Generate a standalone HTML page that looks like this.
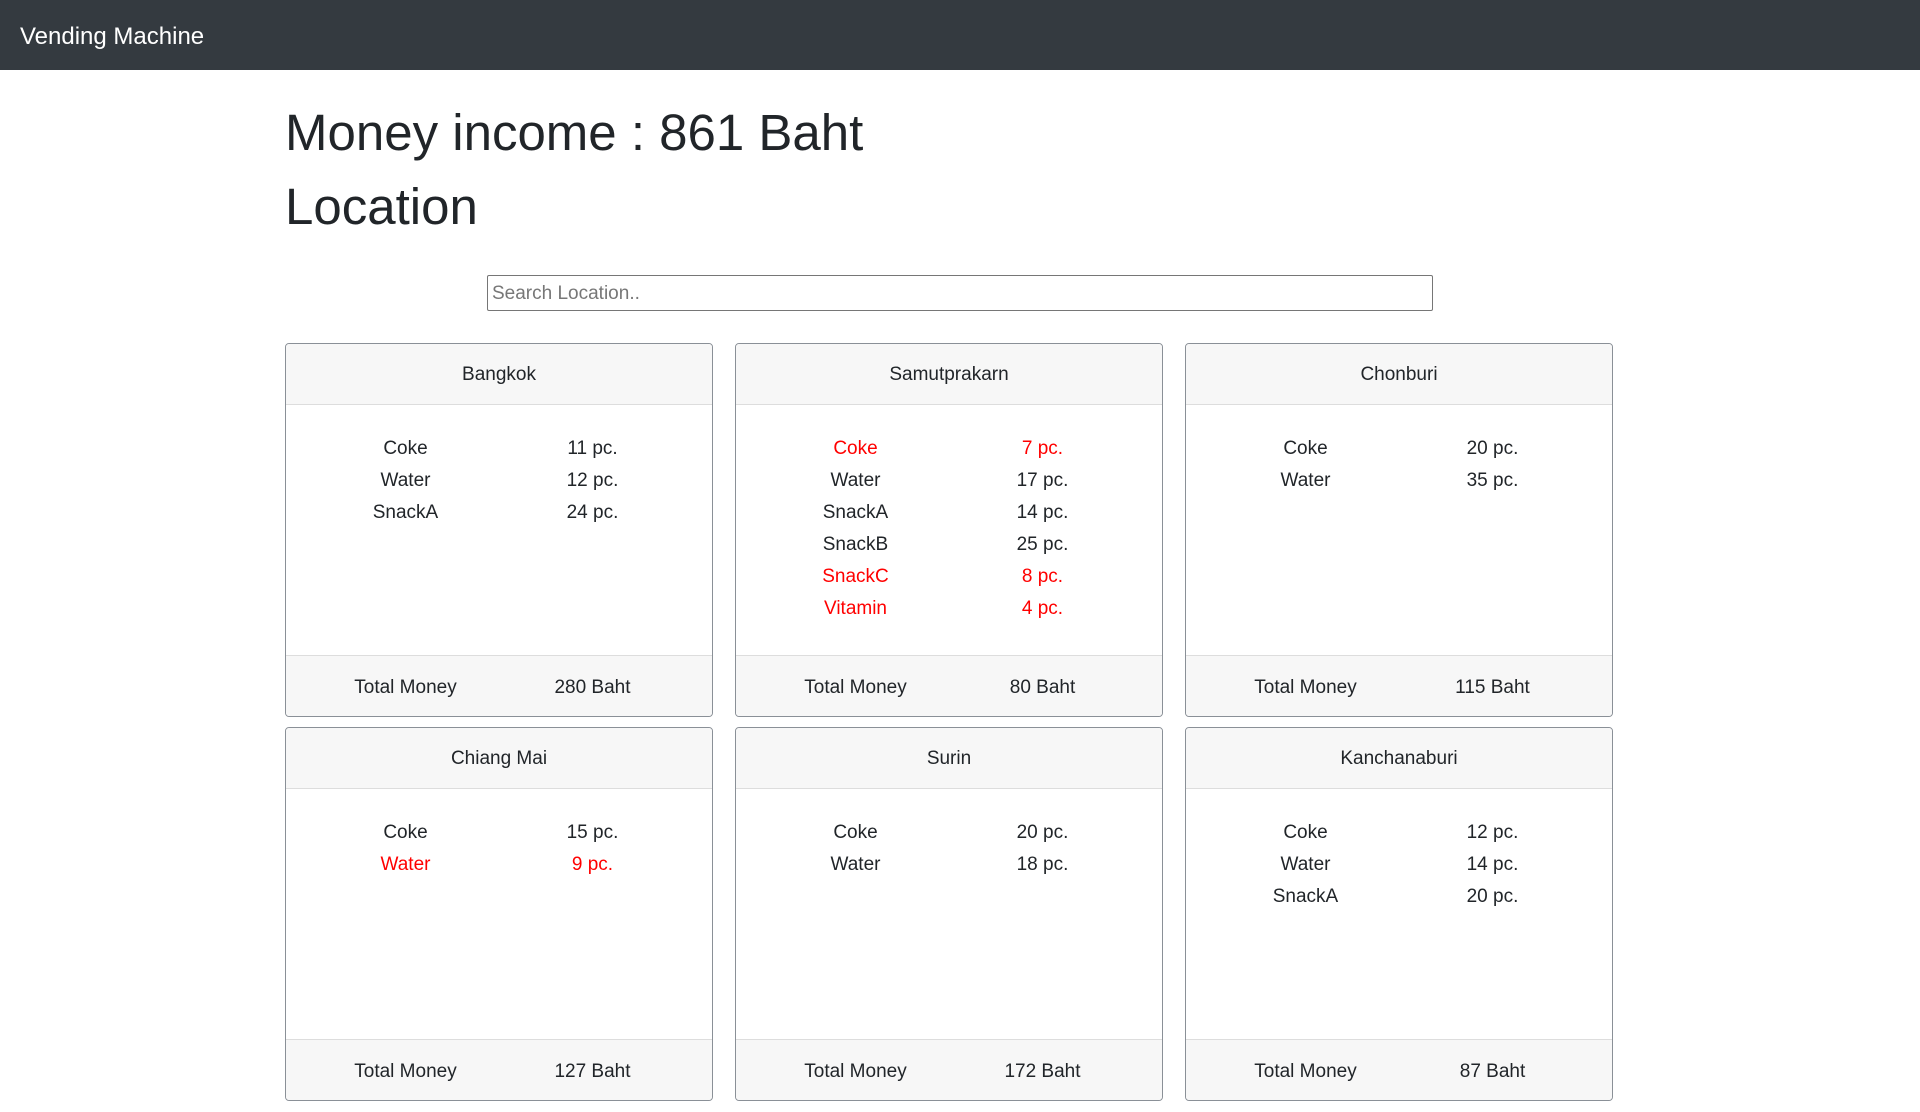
<!DOCTYPE html>
<html><head><meta charset="utf-8"><style>
*{box-sizing:border-box;margin:0;padding:0}
body{width:1920px;height:1112px;overflow:hidden;background:#fff;font-family:"Liberation Sans",sans-serif;color:#212529}
.nav{position:absolute;left:0;top:0;width:1920px;height:70px;background:#343a40}
.nav span{position:absolute;left:20px;top:23px;font-size:24px;color:#fff}
h1{position:absolute;left:285px;font-weight:500;font-size:51px;line-height:60px;color:#212529}
.search{position:absolute;left:487px;top:275px;width:946px;height:36px;border:1px solid #767676;border-radius:2px;font-size:19px;color:#777;padding:7px 4px}
.card{position:absolute;width:428px;height:374px;border:1px solid #8a9097;border-radius:4px;overflow:hidden;background:#fff}
.hd{height:61px;background:#f7f7f7;border-bottom:1px solid #ddd;text-align:center;line-height:62px;font-size:19px}
.bd{height:250px;padding:28px 26px 0}
.row{display:flex;height:32px;line-height:32px;font-size:19px}
.row div{flex:1;text-align:center}
.red{color:#f00}
.ft{height:63px;background:#f7f7f7;border-top:1px solid #ddd;display:flex;padding:0 26px;line-height:63px;font-size:19px}
.ft div{flex:1;text-align:center}
</style></head><body>
<div class="nav"><span>Vending Machine</span></div>
<h1 style="top:103px">Money income : 861 Baht</h1>
<h1 style="top:177px">Location</h1>
<div class="search">Search Location..</div>

<div class="card" style="left:285px;top:343px"><div class="hd">Bangkok</div><div class="bd">
<div class="row"><div>Coke</div><div>11 pc.</div></div>
<div class="row"><div>Water</div><div>12 pc.</div></div>
<div class="row"><div>SnackA</div><div>24 pc.</div></div>
</div><div class="ft"><div>Total Money</div><div>280 Baht</div></div></div>

<div class="card" style="left:735px;top:343px"><div class="hd">Samutprakarn</div><div class="bd">
<div class="row red"><div>Coke</div><div>7 pc.</div></div>
<div class="row"><div>Water</div><div>17 pc.</div></div>
<div class="row"><div>SnackA</div><div>14 pc.</div></div>
<div class="row"><div>SnackB</div><div>25 pc.</div></div>
<div class="row red"><div>SnackC</div><div>8 pc.</div></div>
<div class="row red"><div>Vitamin</div><div>4 pc.</div></div>
</div><div class="ft"><div>Total Money</div><div>80 Baht</div></div></div>

<div class="card" style="left:1185px;top:343px"><div class="hd">Chonburi</div><div class="bd">
<div class="row"><div>Coke</div><div>20 pc.</div></div>
<div class="row"><div>Water</div><div>35 pc.</div></div>
</div><div class="ft"><div>Total Money</div><div>115 Baht</div></div></div>

<div class="card" style="left:285px;top:727px"><div class="hd">Chiang Mai</div><div class="bd">
<div class="row"><div>Coke</div><div>15 pc.</div></div>
<div class="row red"><div>Water</div><div>9 pc.</div></div>
</div><div class="ft"><div>Total Money</div><div>127 Baht</div></div></div>

<div class="card" style="left:735px;top:727px"><div class="hd">Surin</div><div class="bd">
<div class="row"><div>Coke</div><div>20 pc.</div></div>
<div class="row"><div>Water</div><div>18 pc.</div></div>
</div><div class="ft"><div>Total Money</div><div>172 Baht</div></div></div>

<div class="card" style="left:1185px;top:727px"><div class="hd">Kanchanaburi</div><div class="bd">
<div class="row"><div>Coke</div><div>12 pc.</div></div>
<div class="row"><div>Water</div><div>14 pc.</div></div>
<div class="row"><div>SnackA</div><div>20 pc.</div></div>
</div><div class="ft"><div>Total Money</div><div>87 Baht</div></div></div>
</body></html>
